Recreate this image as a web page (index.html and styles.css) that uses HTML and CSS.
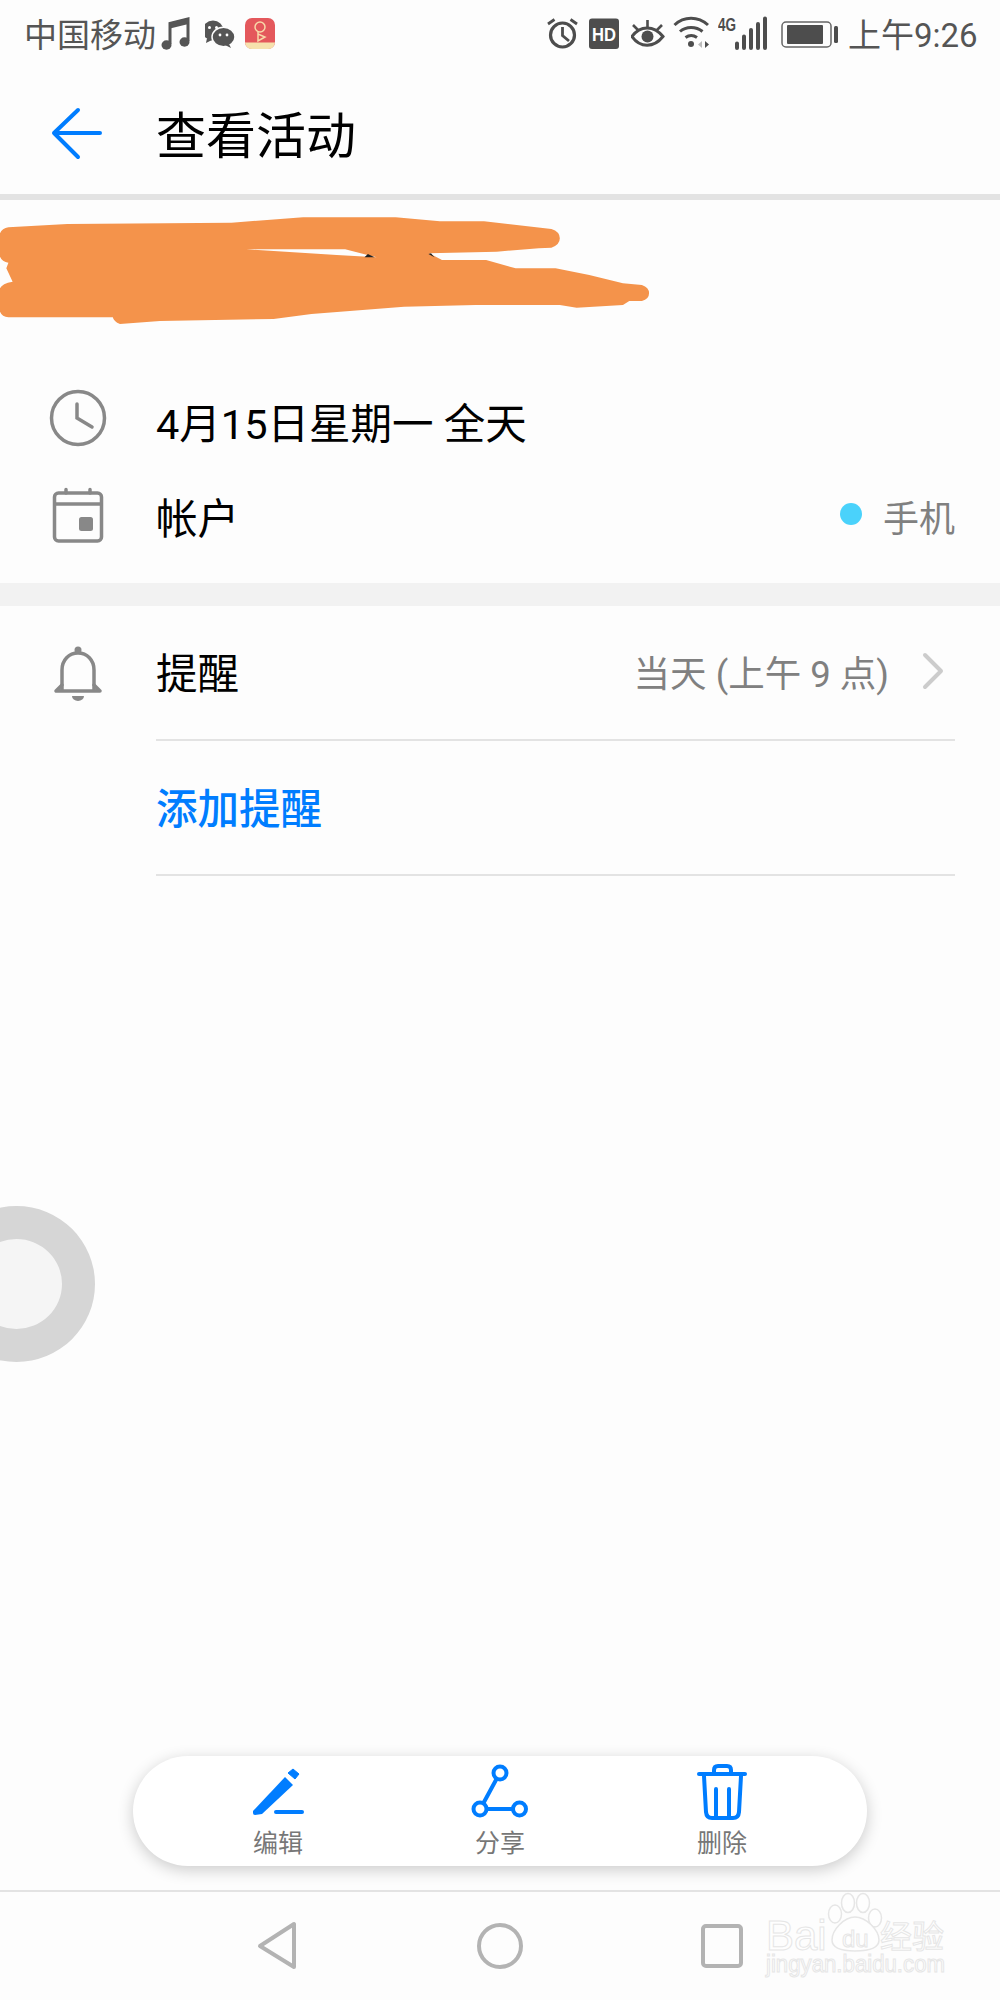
FILE: index.html
```html
<!DOCTYPE html>
<html lang="zh-CN">
<head>
<meta charset="utf-8">
<title>查看活动</title>
<link rel="stylesheet" href="styles.css">
</head>
<body>
<div class="page">
  <div class="status">
    <div class="status-group">
      <span class="status-text carrier">中国移动</span>
      <svg class="st" width="50" height="64" viewBox="155 0 50 64">
        <path d="M170 44V23.5L188 19V41" fill="none" stroke="#555" stroke-width="3"/>
        <path d="M170 22.5L188.500 18V24L170 28.500Z" fill="#555"/>
        <ellipse cx="166.500" cy="45" rx="5" ry="4.700" fill="#555"/>
        <ellipse cx="184.500" cy="42" rx="5" ry="4.700" fill="#555"/>
      </svg>
      <svg class="st" width="40" height="64" viewBox="205 0 40 64">
        <ellipse cx="213" cy="30.500" rx="10.500" ry="10" fill="#555"/>
        <path d="M207 38L206 43L212 40Z" fill="#555"/>
        <ellipse cx="223.500" cy="37" rx="11.500" ry="9.800" fill="#555" stroke="#fdfdfd" stroke-width="1.500"/>
        <path d="M229 44L231 48L225 45Z" fill="#555"/>
        <circle cx="209.500" cy="27.500" r="1.500" fill="#fff"/><circle cx="216.500" cy="27.500" r="1.500" fill="#fff"/>
        <circle cx="220" cy="35" r="1.400" fill="#fff"/><circle cx="227" cy="35" r="1.400" fill="#fff"/>
      </svg>
      <svg class="st" width="32" height="64" viewBox="245 0 32 64">
        <rect x="245" y="18" width="30" height="31" rx="7" fill="#e4585c"/>
        <path d="M245 42.500H275A7 7 0 0 1 268 49H252A7 7 0 0 1 245 42.500Z" fill="#f6e2ad"/>
        <circle cx="260" cy="27" r="5" fill="none" stroke="#f8d9a8" stroke-width="1.500"/>
        <path d="M258 31V41L265 37L258 34" fill="none" stroke="#f8d9a8" stroke-width="1.500"/>
      </svg>
    </div>
    <div class="status-group">
      <svg class="st" width="42" height="64" viewBox="547 0 42 64" fill="none" stroke="#4d4d4d">
        <circle cx="562.500" cy="35" r="12" stroke-width="3.200"/>
        <path d="M562.500 27V35.500L569 41" stroke-width="2.800"/>
        <path d="M548 24L554.500 19.500M570.500 19.500L577 24" stroke-width="2.800"/>
      </svg>
      <svg class="st" width="42" height="64" viewBox="589 0 42 64">
        <rect x="589" y="18.500" width="30" height="30.500" rx="3" fill="#4d4d4d"/>
        <text class="hd" x="604" y="41" text-anchor="middle" textLength="24" lengthAdjust="spacingAndGlyphs">HD</text>
      </svg>
      <svg class="st" width="42" height="64" viewBox="631 0 42 64" fill="none" stroke="#4d4d4d">
        <path d="M632 36.500C640 25 654 25 663 36.500C654 48 640 48 632 36.500Z" stroke-width="3"/>
        <circle cx="647.500" cy="36.500" r="6" fill="#4d4d4d" stroke="none"/>
        <path d="M633 25L638 30M647.500 20V27M662 25L657 30" stroke-width="2.600"/>
      </svg>
      <svg class="st" width="45" height="64" viewBox="673 0 45 64" fill="none" stroke="#4d4d4d" stroke-width="3">
        <path d="M674.500 25C684 16 698 16 708 25"/>
        <path d="M680 31.500C686 26 696 26 702.500 31.500"/>
        <path d="M685.500 37.500C689 35 693.500 35 697 37.500"/>
        <circle cx="691" cy="44" r="3" fill="#4d4d4d" stroke="none"/>
        <path d="M702 41V48L698 44.500Z" fill="#bbb" stroke="none"/>
        <path d="M705 41V48L709 44.500Z" fill="#4d4d4d" stroke="none"/>
      </svg>
      <svg class="st" width="63" height="64" viewBox="718 0 63 64">
        <text class="fourg" x="718" y="31" textLength="18" lengthAdjust="spacingAndGlyphs">4G</text>
        <path d="M737 43.500V48M744 36.500V48M751 30V48M758 24V48M765 18.500V48" fill="none" stroke="#4d4d4d" stroke-width="4" stroke-linecap="round"/>
      </svg>
      <svg class="st" width="67" height="64" viewBox="781 0 67 64">
        <rect x="782" y="22" width="49" height="25" rx="4" fill="none" stroke="#666" stroke-width="1.500"/>
        <rect x="787" y="25" width="36" height="19" rx="1" fill="#4d4d4d"/>
        <rect x="834" y="26" width="4" height="17" rx="1.500" fill="#4d4d4d"/>
      </svg>
      <span class="status-text clock">上午9:26</span>
    </div>
  </div>

  <header class="appbar">
    <svg class="back" width="60" height="60" viewBox="47 103 60 60" fill="none" stroke="#007dff" stroke-width="4" stroke-linecap="round" stroke-linejoin="round">
      <path d="M78 110L54 133L78 157M54 133H100"/>
    </svg>
    <h1 class="title">查看活动</h1>
  </header>

  <section class="details">
    <svg class="scribble" width="660" height="130" viewBox="0 0 1568 390" preserveAspectRatio="none">
      <path fill="#f4934b" fill-rule="evenodd" d="M20 82L160 72L550 68L720 52L940 52L1045 64L1150 64L1310 87Q1330 95 1330 115Q1330 135 1310 143L1280 145L1180 155L1020 160L1050 180L1155 180L1225 205L1320 205L1400 225L1480 250L1525 255Q1542 262 1542 280Q1542 298 1525 303L1495 303L1480 315L1370 323L1330 315L1130 315L960 320L740 342L650 357L380 363L285 372Q270 365 268 352L20 352Q5 350 0 335L0 265Q5 250 30 245L15 205L20 188Q5 185 0 170L0 100Q5 85 20 82ZM585 148L820 148L895 172L800 165Z"/>
      <path fill="#222" d="M866 172L874 162L890 172ZM1018 162L1024 160L1032 172Z"/>
    </svg>
    <div class="rows">
      <div class="row">
        <div class="row-icon">
          <svg class="lift" width="60" height="60" viewBox="48 387 60 60" fill="none" stroke="#888" stroke-width="3.500" stroke-linecap="round">
            <circle cx="78" cy="417" r="26.500"/>
            <path d="M77 403V417L92 426"/>
          </svg>
        </div>
        <span class="row-text">4月15日星期一 全天</span>
      </div>
      <div class="row">
        <div class="row-icon">
          <svg class="lift-small" width="60" height="60" viewBox="48 485 60 60" fill="none" stroke="#888" stroke-width="3.500" stroke-linecap="round">
            <rect x="54.500" y="493" width="47" height="48" rx="4"/>
            <path d="M55 504H101M66 489.500V493M90 489.500V493"/>
            <rect x="79" y="517" width="14" height="14" rx="2.500" fill="#888" stroke="none"/>
          </svg>
        </div>
        <span class="row-text">帐户</span>
        <div class="meta">
          <span class="dot"></span>
          <span class="meta-text">手机</span>
        </div>
      </div>
    </div>
  </section>

  <div class="band"></div>

  <section class="reminders">
    <div class="list-row">
      <div class="row-icon">
        <svg width="60" height="60" viewBox="48 643 60 60" fill="none" stroke="#888" stroke-width="3.500" stroke-linejoin="round" stroke-linecap="round">
          <path d="M62 689V669C62 659 69 652 78 652C87 652 94 659 94 669V689"/>
          <path d="M56 690H100L94 684M56 690L62 684"/>
          <circle cx="78" cy="649" r="3.500" fill="#888" stroke="none"/>
          <path d="M72 695H84A6 5 0 0 1 72 695Z" fill="#888" stroke="none"/>
        </svg>
      </div>
      <div class="list-body">
        <span class="row-text">提醒</span>
        <div class="meta">
          <span class="meta-text wide">当天 (上午 9 点)</span>
          <svg class="chev" width="22" height="38" viewBox="0 0 22 38" fill="none" stroke="#ccc" stroke-width="4" stroke-linecap="round" stroke-linejoin="round">
            <path d="M3 3L19 19L3 35"/>
          </svg>
        </div>
      </div>
    </div>
    <div class="list-row">
      <div class="row-icon"></div>
      <div class="list-body">
        <span class="row-text add">添加提醒</span>
      </div>
    </div>
  </section>

  <div class="spacer"></div>

  <div class="float-ring"></div>

  <nav class="pill">
    <div class="action">
      <svg width="60" height="58" viewBox="248 1762 60 58">
        <path d="M253 1811L285 1777L293 1785L262 1814L255 1815Q253 1815 253 1813Z" fill="#007dff"/>
        <path d="M288 1773L293 1769L299 1774L295 1779Z" fill="#007dff" stroke="#007dff" stroke-width="1" stroke-linejoin="round"/>
        <path d="M276 1812H302" stroke="#007dff" stroke-width="4" stroke-linecap="round"/>
      </svg>
      <span class="action-label">编辑</span>
    </div>
    <div class="action">
      <svg width="60" height="58" viewBox="470 1762 60 58" fill="none" stroke="#007dff" stroke-width="4">
        <circle cx="500" cy="1773" r="6.500"/>
        <circle cx="480" cy="1809" r="6.500"/>
        <circle cx="519.500" cy="1809" r="6.500"/>
        <path d="M496.500 1779L483.500 1803M486.500 1809H513"/>
      </svg>
      <span class="action-label">分享</span>
    </div>
    <div class="action">
      <svg width="60" height="58" viewBox="692 1762 60 58" fill="none" stroke="#007dff" stroke-width="4" stroke-linecap="round">
        <path d="M699 1774H745"/>
        <path d="M714 1773V1770Q714 1766 718 1766H727Q731 1766 731 1770V1773"/>
        <path d="M704 1776L706 1812Q706.500 1818 712 1818H733Q738.500 1818 739 1812L741 1776"/>
        <path d="M716 1789V1817M729 1789V1817"/>
      </svg>
      <span class="action-label">删除</span>
    </div>
  </nav>

  <footer class="navbar">
    <svg width="60" height="60" viewBox="248 1915 60 60" fill="none" stroke="#b3b3b3" stroke-width="4" stroke-linejoin="round">
      <path d="M260 1945L294 1923V1966Z"/>
    </svg>
    <svg width="60" height="60" viewBox="470 1915 60 60" fill="none" stroke="#b3b3b3" stroke-width="4">
      <circle cx="500" cy="1945" r="21"/>
    </svg>
    <svg width="60" height="60" viewBox="692 1915 60 60" fill="none" stroke="#b3b3b3" stroke-width="4">
      <rect x="703" y="1925" width="38" height="40" rx="3"/>
    </svg>
    <svg class="watermark" width="190" height="92" viewBox="760 1890 190 92">
      <g fill="#fefefe" stroke="#e6e6e6" stroke-width="1.500">
        <ellipse cx="835" cy="1914" rx="6.500" ry="9"/>
        <ellipse cx="848" cy="1903" rx="6.500" ry="9.500"/>
        <ellipse cx="863" cy="1903" rx="6.500" ry="9.500"/>
        <ellipse cx="875" cy="1918" rx="6.500" ry="9"/>
        <path d="M855 1917C866 1917 879 1930 879 1940C879 1948 870 1951 855 1951C840 1951 832 1948 832 1940C832 1930 844 1917 855 1917Z"/>
      </g>
      <text class="wm wm-bai" x="766" y="1950">Bai</text>
      <text class="wm wm-du" x="842" y="1947">du</text>
      <text class="wm wm-jy" x="880" y="1948">经验</text>
      <text class="wm wm-url" x="766" y="1972" textLength="179" lengthAdjust="spacingAndGlyphs">jingyan.baidu.com</text>
    </svg>
  </footer>
</div>
</body>
</html>
```

FILE: styles.css
```css
* { box-sizing: border-box; }
html, body { margin: 0; padding: 0; }
body { font-family: Roboto, "Noto Sans CJK SC", sans-serif; background: #fdfdfd; }

.page {
  position: relative;
  width: 1000px;
  height: 2000px;
  overflow: hidden;
  display: flex;
  flex-direction: column;
  background: #fdfdfd;
}

.status {
  flex: none;
  height: 64px;
  display: flex;
  justify-content: space-between;
  padding: 0 23px 0 24px;
}
.status-group { display: flex; align-items: flex-start; }
.st { display: block; flex: none; }
.status-text {
  font-size: 33px;
  line-height: 71px;
  color: #555;
  white-space: nowrap;
}
.carrier { width: 131px; }
.clock { width: 129px; }
.hd { font: bold 19px "Liberation Sans", sans-serif; fill: #fff; }
.fourg { font: bold 18px "Liberation Sans", sans-serif; fill: #4d4d4d; }

.appbar {
  flex: none;
  height: 130px;
  display: flex;
  align-items: center;
  padding-left: 47px;
}
.back { display: block; flex: none; margin-right: 49px; margin-top: 8px; }
.title {
  margin: 16px 0 0;
  font-size: 50px;
  font-weight: 400;
  line-height: 60px;
  color: #000;
}

.details { flex: none; height: 389px; border-top: 6px solid #e3e3e3; }
.scribble { display: block; }
.rows { padding-top: 45px; }
.row {
  height: 95px;
  display: flex;
  align-items: center;
  padding-right: 45px;
}
.row-icon {
  flex: none;
  width: 156px;
  display: flex;
  justify-content: center;
}
.row-icon svg { display: block; }
.lift { margin-top: -10px; }
.lift-small { margin-top: -5px; }
.row-text { margin-top: 4px; font-size: 41.500px; line-height: 56px; color: #000; }
.add { color: #007dff; font-weight: 500; }
.meta { margin-left: auto; display: flex; align-items: center; gap: 21px; }
.meta-text { margin-top: 4px; font-size: 36px; line-height: 50px; color: #808080; white-space: nowrap; }
.wide { font-size: 36.500px; }
.dot { width: 22px; height: 22px; border-radius: 50%; background: #4ad2fb; margin-top: -7px; }
.chev { display: block; margin: -4px 11px 0 12px; }

.band { flex: none; height: 23px; background: #f2f2f2; }

.reminders { flex: none; }
.list-row { display: flex; align-items: center; height: 135px; padding-right: 45px; }
.list-body {
  flex: 1;
  height: 100%;
  display: flex;
  align-items: center;
  border-bottom: 2px solid #e3e3e3;
}

.spacer { flex: 1; }

.float-ring {
  position: absolute;
  left: -62px;
  top: 1206px;
  width: 157px;
  height: 156px;
  border-radius: 50%;
  background: #f5f5f5;
  border: 33px solid #d6d6d6;
}

.pill {
  flex: none;
  align-self: center;
  width: 734px;
  height: 110px;
  margin-bottom: 24px;
  padding: 6px 34px 0;
  display: grid;
  grid-template-columns: repeat(3, 222px);
  background: #fff;
  border-radius: 55px;
  box-shadow: 0 4px 16px rgba(0, 0, 0, 0.2);
}
.action { display: flex; flex-direction: column; align-items: center; }
.action svg { display: block; }
.action-label { margin-top: 9px; font-size: 25px; line-height: 30px; color: #777; }

.navbar {
  position: relative;
  flex: none;
  height: 110px;
  border-top: 2px solid #e3e3e3;
  display: grid;
  grid-template-columns: repeat(3, 222px);
  justify-content: center;
  justify-items: center;
  align-items: center;
}
.navbar > svg { display: block; }
.navbar > .watermark { position: absolute; left: 760px; top: -2px; }
.wm { fill: #fefefe; stroke: #e6e6e6; stroke-width: 1px; font-family: "Liberation Sans", "Noto Sans CJK SC", sans-serif; }
.wm-bai { font-size: 42px; }
.wm-du { font-size: 24px; }
.wm-jy { font-size: 32px; }
.wm-url { font-size: 23px; }
```
